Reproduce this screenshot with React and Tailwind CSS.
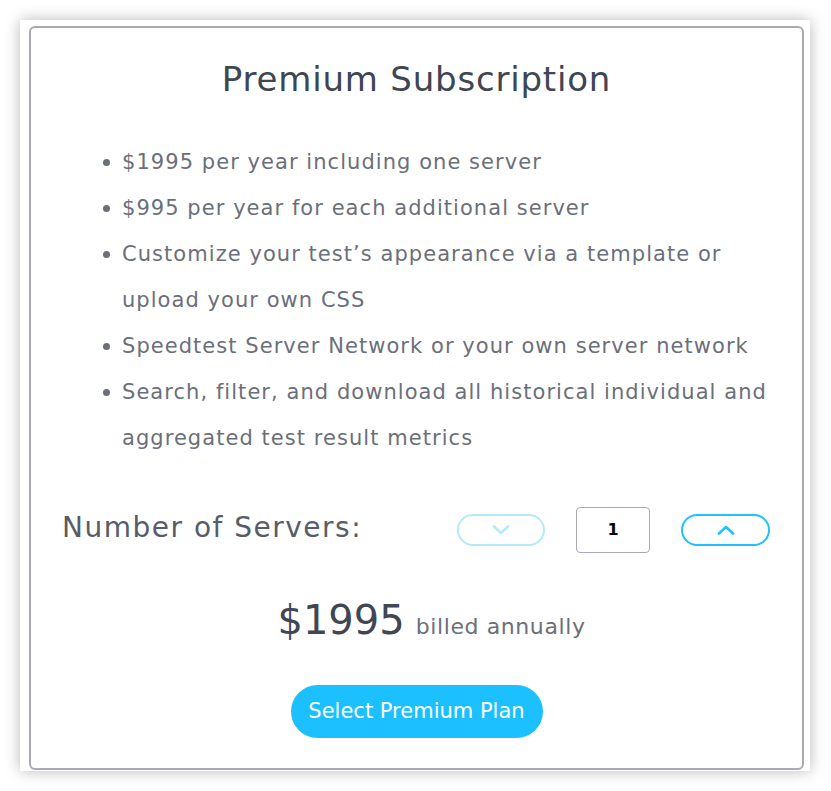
const features = [
  ['$1995 per year including one server'],
  ['$995 per year for each additional server'],
  ['Customize your test’s appearance via a template or', 'upload your own CSS'],
  ['Speedtest Server Network or your own server network'],
  ['Search, filter, and download all historical individual and', 'aggregated test result metrics'],
];

function Chevron({ up = false }) {
  return (
    <svg width="18" height="10" viewBox="0 0 18 10" fill="none" stroke="currentColor" strokeWidth="2.6" strokeLinecap="round" strokeLinejoin="round">
      {up ? <polyline points="2,8.5 9,2 16,8.5" /> : <polyline points="2,1.5 9,8 16,1.5" />}
    </svg>
  );
}

export default function App() {
  return (
    <div className="w-[831px] h-[791px] bg-white pt-[20px] pl-[20px]" style={{ fontFamily: '"DejaVu Sans", sans-serif' }}>
      <div className="w-[790px] h-[751px] bg-white shadow-[0_0_14px_rgba(0,0,0,0.28)] pt-[6px] pl-[9px]">
        <div className="w-[775px] h-[744px] border-2 border-[#a9a9b6] rounded-[6px] flex flex-col">
          <h1 className="mt-[31px] text-center text-[34px] leading-[40px] tracking-[0.8px] text-[#3f4552]">Premium Subscription</h1>

          <ul className="mt-[40px] pl-[72px] text-[21px] leading-[46px] tracking-[1.05px] text-[#6b6f79]">
            {features.map((lines, i) => (
              <li key={i} className="flex">
                <span className="w-[19px] shrink-0 flex pt-[20px]">
                  <span className="w-[7px] h-[7px] rounded-full bg-[#6b6f79]" />
                </span>
                <span>
                  {lines.map((l, j) => (
                    <span key={j} className="block whitespace-nowrap">{l}</span>
                  ))}
                </span>
              </li>
            ))}
          </ul>

          <div className="mt-[46px] flex items-center pl-[31px] pr-[32px] h-[46px]">
            <span className="text-[28px] tracking-[1.5px] text-[#575c68] -mt-[4px]">Number of Servers:</span>
            <div className="ml-auto flex items-center">
              <button className="w-[88px] h-[32px] rounded-full border-2 border-[#b4e9fc] flex items-center justify-center text-[#b4e9fc]">
                <Chevron />
              </button>
              <div className="ml-[31px] w-[74px] h-[46px] border border-[#a9a9b6] rounded-[4px] flex items-center justify-center text-[16px] font-bold text-black">1</div>
              <button className="ml-[31px] w-[89px] h-[32px] rounded-full border-2 border-[#1ec0ff] flex items-center justify-center text-[#1ec0ff]">
                <Chevron up />
              </button>
            </div>
          </div>

          <div className="mt-[42px] pl-[30px] flex items-baseline justify-center text-[#404653]">
            <span className="text-[40px] leading-[50px]">$1995</span>
            <span className="ml-[11px] text-[22px] tracking-[0.6px] text-[#6b6f79]">billed annually</span>
          </div>

          <div className="mt-[40px] flex justify-center">
            <button className="w-[252px] h-[53px] rounded-full bg-[#1cc0ff] text-white text-[21px]">Select Premium Plan</button>
          </div>
        </div>
      </div>
    </div>
  );
}
